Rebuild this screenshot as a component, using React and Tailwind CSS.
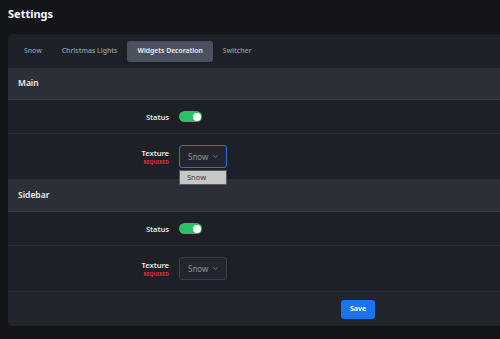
import { ChevronDown } from "lucide-react";

const tabs = ["Snow", "Christmas Lights", "Widgets Decoration", "Switcher"];

const Toggle = () => (
  <div className="w-[23px] h-[11px] rounded-full bg-[#2ebd6b] flex items-center justify-end px-[1.5px]">
    <div className="w-[8px] h-[8px] rounded-full bg-white" />
  </div>
);

const Select = ({ focused, open }) => (
  <div className="relative">
    <div
      className={`w-[48px] h-[23px] rounded-[3px] border flex items-center justify-between pl-[8px] pr-[7px] bg-[#23262e] ${
        focused ? "border-[#2f6fd8]" : "border-[#3a3e48]"
      }`}
    >
      <span className="text-[8px] text-[#8e939c]">Snow</span>
      <ChevronDown size={7} strokeWidth={2.5} className="text-[#8e939c]" />
    </div>
    {open && (
      <div className="absolute left-0 top-[25px] w-[48px] h-[15px] bg-[#c7c7c7] border border-[#5a5a5a] flex items-center pl-[7px] z-10">
        <span className="text-[7.5px] text-[#3a3a3a]">Snow</span>
      </div>
    )}
  </div>
);

const Row = ({ label, required, children, tall }) => (
  <div className={`flex items-center border-b border-[#2c2f37] ${tall ? "h-[46px]" : "h-[34px]"}`}>
    <div className="w-[161px] flex flex-col items-end">
      <span className="text-[7.5px] font-semibold text-[#e6e7ea] leading-[10px]">{label}</span>
      {required && (
        <span className="text-[5px] font-bold text-[#d9363e] leading-[8px]">REQUIRED</span>
      )}
    </div>
    <div className="pl-[10px]">{children}</div>
  </div>
);

const Section = ({ title, open }) => (
  <div>
    <div className="h-[32px] flex items-center px-[10px] bg-[#2b2f37] border-b border-[#353943]">
      <span className="text-[8.5px] font-semibold text-[#f0f1f3]">{title}</span>
    </div>
    <Row label="Status">
      <Toggle />
    </Row>
    <Row label="Texture" required tall>
      <Select focused={open} open={open} />
    </Row>
  </div>
);

export default function App() {
  return (
    <div
      className="w-[500px] h-[339px] overflow-hidden bg-[#141519]"
      style={{ fontFamily: '"Noto Sans", "Open Sans", sans-serif' }}
    >
      <div className="h-[28px] flex items-center px-[8px]">
        <h1 className="text-[11px] font-bold text-white">Settings</h1>
      </div>
      <div className="ml-[8px] mt-[6px] w-[700px] rounded-[5px] bg-[#1e2027]">
        <div className="h-[34px] flex items-center pl-[6px]">
          {tabs.map((t) => (
            <div
              key={t}
              className={`h-[21px] px-[10px] flex items-center rounded-[3px] text-[6.8px] font-semibold ${
                t === "Widgets Decoration" ? "bg-[#4a515e] text-[#eef0f3]" : "text-[#8a8f98]"
              }`}
            >
              {t}
            </div>
          ))}
        </div>
        <Section title="Main" open />
        <Section title="Sidebar" />
        <div className="h-[34px] flex items-center justify-center bg-[#22252c] rounded-b-[5px]">
          <button className="h-[19px] px-[9px] rounded-[3px] bg-[#1a74f0] text-white text-[7px] font-bold">
            Save
          </button>
        </div>
      </div>
    </div>
  );
}
